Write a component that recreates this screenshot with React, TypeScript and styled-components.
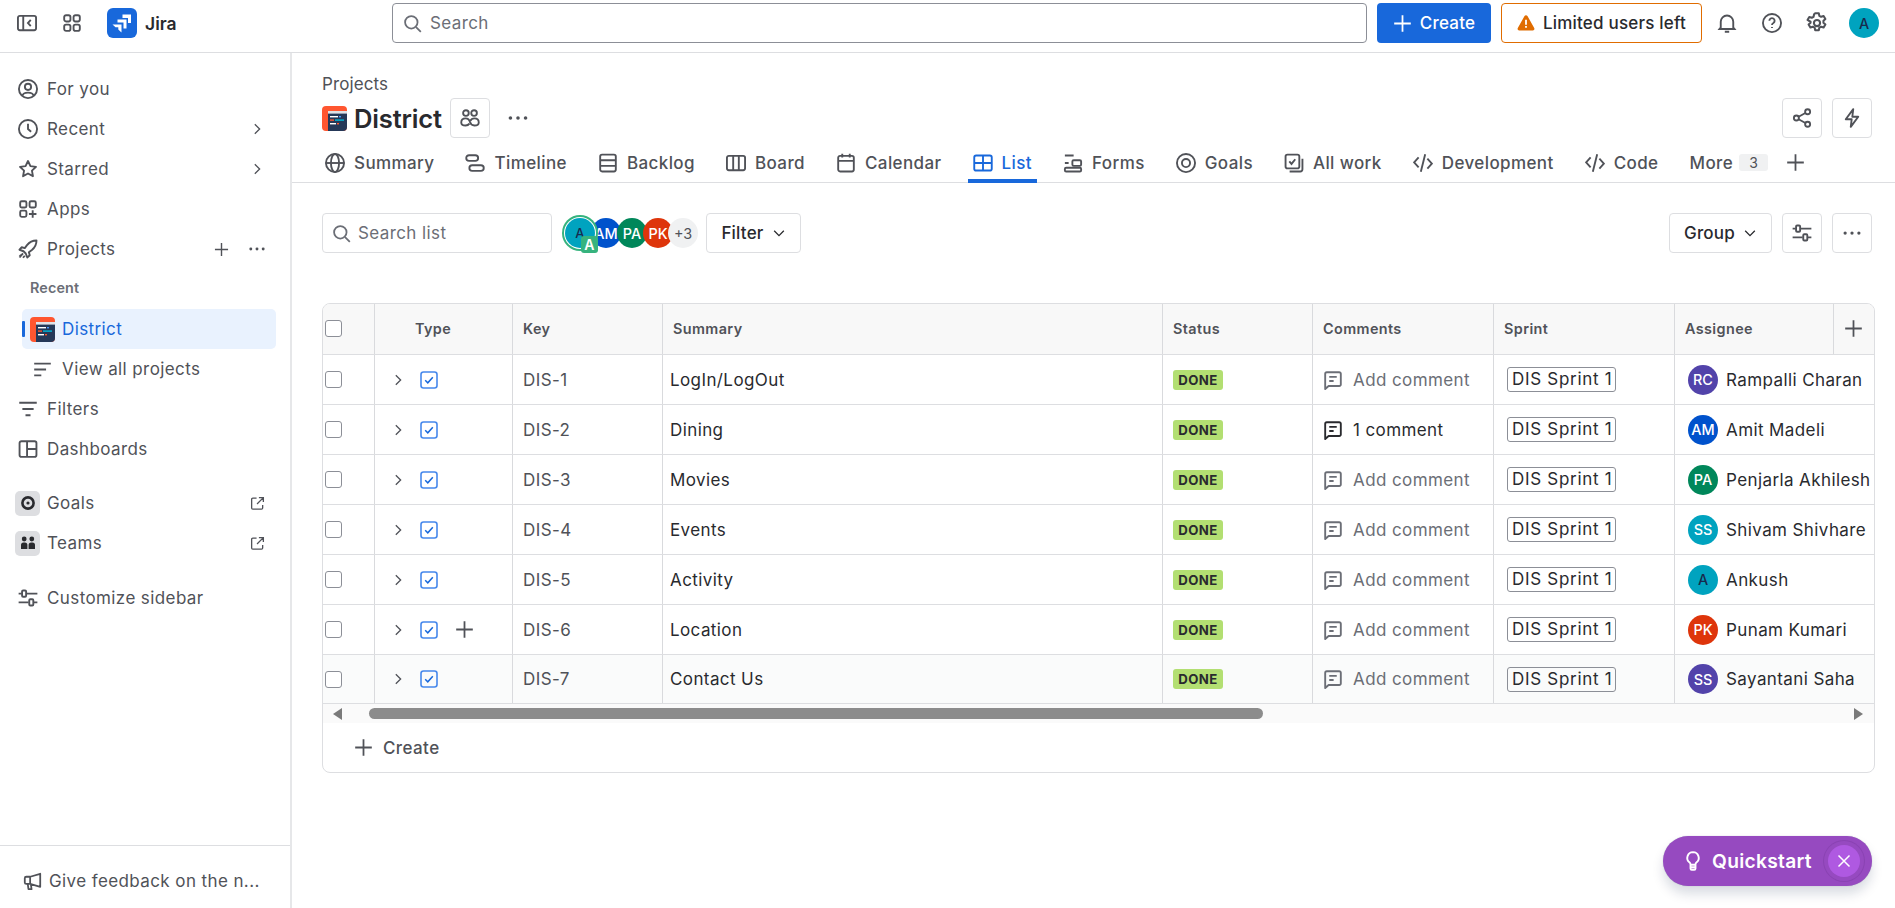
import React from 'react';
import styled, { createGlobalStyle } from 'styled-components';

const GlobalStyle = createGlobalStyle`
  * { box-sizing: border-box; }
  html, body {
    background: #fff;
    color: #292a2e;
    font-family: Inter, "Noto Sans", sans-serif;
    font-size: 17px;
    height: 100%;
    letter-spacing: 0.4px;
    margin: 0;
    overflow: hidden;
  }
`;

const Page = styled.div`
  display: flex;
  flex-direction: column;
  height: 908px;
  position: relative;
  width: 1895px;
`;

const TopBar = styled.header`
  align-items: center;
  border-bottom: 1px solid #dddee1;
  display: flex;
  flex: none;
  height: 53px;
  padding: 0 15px 6px 17px;
`;

const IconSlot = styled.span<{ $w?: number; $color?: string }>`
  align-items: center;
  color: ${(p) => p.$color || '#505258'};
  display: inline-flex;
  flex: none;
  justify-content: center;
  width: ${(p) => (p.$w ? `${p.$w}px` : 'auto')};
`;

const SwitcherSlot = styled(IconSlot)`
  margin-left: 25px;
`;

const LogoLink = styled.div`
  align-items: center;
  display: flex;
  gap: 8px;
  margin-left: 25px;
  margin-right: 215px;
  width: 71px;
`;

const Brand = styled.span`
  color: #292a2e;
  font-size: 17.5px;
  font-weight: 600;
  letter-spacing: 0;
`;

const GlobalSearch = styled.div`
  align-items: center;
  border: 1px solid #8c8f97;
  border-radius: 4px;
  color: #6b6e76;
  display: flex;
  gap: 8px;
  height: 40px;
  margin-left: -1px;
  padding: 0 10px;
  width: 975px;
`;

const CreateButton = styled.div`
  align-items: center;
  background: #1868db;
  border-radius: 4px;
  color: #fff;
  display: flex;
  font-weight: 500;
  gap: 8px;
  height: 40px;
  justify-content: center;
  letter-spacing: 0.2px;
  margin-left: 10px;
  width: 114px;
`;

const UsersLeft = styled.div`
  align-items: center;
  border: 1px solid #e06c00;
  border-radius: 4px;
  color: #292a2e;
  display: flex;
  font-weight: 500;
  gap: 8px;
  height: 40px;
  justify-content: center;
  letter-spacing: 0.2px;
  margin-left: 10px;
  margin-right: 2px;
  width: 201px;
`;

const TopIcon = styled.span`
  align-items: center;
  color: #505258;
  display: flex;
  justify-content: center;
  width: 45px;
`;

const Avatar = styled.span<{ $bg: string; $dark?: boolean; $size?: number }>`
  align-items: center;
  background: ${(p) => p.$bg};
  border-radius: 50%;
  color: ${(p) => (p.$dark ? '#172b4d' : '#fff')};
  display: inline-flex;
  flex: none;
  font-size: 14.4px;
  font-weight: 500;
  height: ${(p) => p.$size || 30}px;
  justify-content: center;
  letter-spacing: 0;
  width: ${(p) => p.$size || 30}px;
`;

const MyAvatar = styled(Avatar)`
  margin-left: 10px;
`;

const Body = styled.div`
  display: flex;
  flex: 1;
  min-height: 0;
`;

const Sidebar = styled.aside`
  border-right: 2px solid #e6e7e9;
  display: flex;
  flex: none;
  flex-direction: column;
  width: 292px;
`;

const SideNav = styled.nav`
  display: flex;
  flex: 1;
  flex-direction: column;
  padding: 16px 14px 0 0;
`;

const NavRow = styled.div<{ $gapTop?: number; $active?: boolean }>`
  align-items: center;
  background: ${(p) => (p.$active ? '#e9f2fe' : 'transparent')};
  border-radius: ${(p) => (p.$active ? '5px' : '0')};
  color: ${(p) => (p.$active ? '#1868db' : '#505258')};
  display: flex;
  flex: none;
  height: 40px;
  margin-top: ${(p) => p.$gapTop || 0}px;
  padding: 0 1px 0 15px;
  position: relative;
`;

const NavIcon = styled.span`
  align-items: center;
  color: #505258;
  display: flex;
  flex: none;
  justify-content: center;
  margin-right: 7px;
  width: 25px;
`;

const NavLabel = styled.span`
  flex: 1;
  white-space: nowrap;
`;

const ChildLabel = styled(NavLabel)`
  margin-left: 7px;
`;

const NavAction = styled.span`
  align-items: center;
  color: #505258;
  display: flex;
  flex: none;
  justify-content: center;
  width: 36px;
`;

const SectionLabel = styled.div`
  align-items: center;
  color: #6b6e76;
  display: flex;
  flex: none;
  font-size: 14.4px;
  font-weight: 600;
  height: 40px;
  letter-spacing: 0.1px;
  padding: 0 0 3px 30px;
`;

const ChildRow = styled(NavRow)`
  margin-left: 22px;
  padding-left: 8px;
`;

const SelectedMark = styled.span`
  background: #1868db;
  border-radius: 1px;
  height: 16px;
  left: 0;
  position: absolute;
  top: 12px;
  width: 3px;
`;

const IconTile = styled.span`
  align-items: center;
  background: #dddee1;
  border-radius: 5px;
  color: #292a2e;
  display: flex;
  height: 25px;
  justify-content: center;
  width: 25px;
`;

const SideFooter = styled.div`
  align-items: center;
  border-top: 1px solid #dddee1;
  color: #505258;
  display: flex;
  flex: none;
  gap: 7px;
  height: 63px;
  padding: 8px 0 0 23px;
  white-space: nowrap;
`;

const Main = styled.main`
  display: flex;
  flex: 1;
  flex-direction: column;
  min-width: 0;
`;

const Crumb = styled.div`
  color: #505258;
  flex: none;
  height: 45px;
  letter-spacing: 0.1px;
  line-height: 26px;
  padding: 18px 0 0 30px;
`;

const TitleRow = styled.div`
  align-items: center;
  display: flex;
  flex: none;
  height: 40px;
  padding: 0 23px 0 30px;
`;

const Title = styled.h1`
  color: #292a2e;
  font-size: 25.6px;
  font-weight: 600;
  letter-spacing: -0.2px;
  margin: 0 8px 0 7px;
`;

const SquareButton = styled.span<{ $left?: number }>`
  align-items: center;
  border: 1px solid #dddee1;
  border-radius: 4px;
  color: #505258;
  display: flex;
  flex: none;
  height: 40px;
  justify-content: center;
  margin-left: ${(p) => p.$left || 0}px;
  width: 40px;
`;

const BareButton = styled(SquareButton)`
  border-color: transparent;
  margin-left: 8px;
`;

const Spacer = styled.span`
  flex: 1;
`;

const TabBar = styled.nav`
  align-items: stretch;
  border-bottom: 1px solid #dddee1;
  display: flex;
  flex: none;
  gap: 21px;
  height: 45px;
  padding-left: 28px;
`;

const Tab = styled.span<{ $active?: boolean }>`
  align-items: center;
  border-bottom: 4px solid ${(p) => (p.$active ? '#1868db' : 'transparent')};
  color: ${(p) => (p.$active ? '#1868db' : '#505258')};
  display: flex;
  font-weight: 500;
  gap: 9px;
  margin-bottom: -1px;
  padding: 8px 5px 0;
  white-space: nowrap;
`;

const MoreCount = styled.span`
  background: #f0f1f2;
  border-radius: 3px;
  color: #505258;
  font-size: 14px;
  font-weight: 400;
  margin-left: -3px;
  padding: 0 10px;
`;

const TabPlus = styled.span`
  align-items: center;
  color: #505258;
  display: flex;
  margin-left: -8px;
  padding-top: 4px;
`;

const Toolbar = styled.div`
  align-items: center;
  display: flex;
  flex: none;
  height: 40px;
  margin-top: 30px;
  padding: 0 23px 0 30px;
`;

const ListSearch = styled.div`
  align-items: center;
  border: 1px solid #dddee1;
  border-radius: 4px;
  color: #6b6e76;
  display: flex;
  gap: 7px;
  height: 40px;
  padding: 0 9px;
  width: 230px;
`;

const AvatarGroup = styled.div`
  align-items: center;
  display: flex;
  margin-left: 11px;
  width: 143px;
`;

const MeAvatar = styled.span`
  align-items: center;
  background: #00a3bf;
  border-radius: 50%;
  box-shadow: 0 0 0 1px #fff, 0 0 0 3px #36b37e;
  color: #172b4d;
  display: inline-flex;
  flex: none;
  font-size: 13px;
  font-weight: 500;
  height: 30px;
  justify-content: center;
  margin-left: 2px;
  position: relative;
  width: 30px;
  z-index: 2;
`;

const MeBadge = styled.span`
  align-items: center;
  background: #36b37e;
  border-radius: 3px;
  bottom: -5px;
  color: #fff;
  display: flex;
  font-size: 14px;
  font-weight: 600;
  height: 17px;
  justify-content: center;
  position: absolute;
  right: -3px;
  width: 17px;
`;

const StackedAvatar = styled(Avatar)`
  margin-left: -4px;
`;

const OverflowAvatar = styled(Avatar)`
  background: #f0f1f2;
  color: #505258;
  font-weight: 400;
  margin-left: -5px;
`;

const SelectButton = styled.span<{ $w: number; $left?: number }>`
  align-items: center;
  border: 1px solid #dddee1;
  border-radius: 4px;
  color: #292a2e;
  display: flex;
  flex: none;
  font-weight: 500;
  gap: 8px;
  height: 40px;
  justify-content: center;
  letter-spacing: 0.2px;
  margin-left: ${(p) => p.$left || 0}px;
  width: ${(p) => p.$w}px;
`;

const TableCard = styled.section`
  border: 1px solid #dddee1;
  border-radius: 8px;
  flex: none;
  margin: 50px 20px 0 30px;
  overflow: hidden;
`;

const COLUMNS = '52px 138px 150px 500px 150px 181px 181px';

const HeadRow = styled.div`
  background: #f8f8f8;
  border-bottom: 1px solid #dddee1;
  display: grid;
  grid-template-columns: ${COLUMNS} 159px 1fr;
  height: 51px;
`;

const Row = styled.div<{ $tint?: boolean; $last?: boolean }>`
  background: ${(p) => (p.$tint ? '#fafbfb' : '#fff')};
  border-bottom: 1px solid #dddee1;
  display: grid;
  grid-template-columns: ${COLUMNS} 1fr;
  height: ${(p) => (p.$last ? 49 : 50)}px;
`;

const Cell = styled.div<{ $pad?: number; $color?: string; $end?: boolean }>`
  align-items: center;
  border-right: ${(p) => (p.$end ? 'none' : '1px solid #d9dadd')};
  color: ${(p) => p.$color || '#292a2e'};
  display: flex;
  min-width: 0;
  overflow: hidden;
  padding-left: ${(p) => (p.$pad === undefined ? 10 : p.$pad)}px;
  white-space: nowrap;
`;

const HeadCell = styled(Cell)`
  color: #505258;
  font-size: 14.4px;
  font-weight: 600;
  padding-bottom: 2px;
`;

const Box = styled.span`
  background: #fff;
  border: 1px solid #8c8f97;
  border-radius: 3px;
  display: block;
  flex: none;
  height: 17px;
  width: 17px;
`;

const TypeIcon = styled.span`
  align-items: center;
  display: flex;
  margin-left: 15px;
`;

const RowPlus = styled.span`
  align-items: center;
  color: #505258;
  display: flex;
  margin-left: 17px;
`;

const Lozenge = styled.span`
  background: #b3df72;
  border-radius: 3px;
  color: #292a2e;
  font-size: 13.2px;
  font-weight: 700;
  height: 20px;
  line-height: 20px;
  text-align: center;
  width: 50px;
`;

const CommentLink = styled.span<{ $has?: boolean }>`
  align-items: center;
  color: ${(p) => (p.$has ? '#292a2e' : '#6b6e76')};
  display: flex;
  gap: 10px;
`;

const SprintChip = styled.span`
  border: 1px solid #8c8f97;
  border-radius: 3px;
  color: #292a2e;
  height: 25px;
  letter-spacing: 0.7px;
  line-height: 23px;
  margin-left: 3px;
  padding: 0 4px;
  width: 109px;
`;

const Assignee = styled.span`
  align-items: center;
  display: flex;
  gap: 8px;
  margin-left: 3px;
`;

const ScrollTrack = styled.div`
  align-items: center;
  background: #fafafa;
  display: flex;
  height: 19px;
`;

const ScrollArrow = styled.span<{ $right?: boolean }>`
  border-bottom: 6px solid transparent;
  border-left: ${(p) => (p.$right ? '9px solid #7a7a7a' : 'none')};
  border-right: ${(p) => (p.$right ? 'none' : '9px solid #7a7a7a')};
  border-top: 6px solid transparent;
  flex: none;
  margin-left: ${(p) => (p.$right ? 'auto' : '10px')};
  margin-right: ${(p) => (p.$right ? '11px' : '0')};
`;

const ScrollThumb = styled.span`
  background: #8c8c8c;
  border-radius: 6px;
  flex: none;
  height: 11px;
  margin-left: 27px;
  width: 894px;
`;

const CreateRow = styled.div`
  align-items: center;
  color: #505258;
  display: flex;
  font-weight: 500;
  gap: 10px;
  height: 49px;
  padding-left: 31px;
`;

const Quickstart = styled.div`
  align-items: center;
  background: #964ac0;
  border-radius: 25px;
  bottom: 22px;
  box-shadow: 0 8px 12px rgba(9, 30, 66, 0.15), 0 0 1px rgba(9, 30, 66, 0.31);
  color: #fff;
  display: flex;
  font-size: 19.2px;
  font-weight: 600;
  height: 50px;
  letter-spacing: 0.3px;
  padding-left: 20px;
  position: absolute;
  right: 23px;
  width: 209px;
`;

const QuickstartLabel = styled.span`
  flex: 1;
  margin-left: 9px;
`;

const QuickstartClose = styled.span`
  align-items: center;
  background: #af59e1;
  border-radius: 50%;
  box-shadow: 0 0 0 4px #964ac0, 0 0 0 5px #8a43b2;
  color: #fff;
  display: flex;
  height: 32px;
  justify-content: center;
  margin-right: 12px;
  width: 32px;
`;

const shapes: Record<string, React.ReactNode> = {
  panel: <><rect x="0.75" y="2.25" width="14.5" height="11.5" rx="1.5" /><path d="M5 2.25v11.5M11 5.5 8.75 8 11 10.5" /></>,
  grid: <><rect x="1.75" y="1.75" width="5" height="5" rx="1.5" /><rect x="9.25" y="1.75" width="5" height="5" rx="1.5" /><rect x="1.75" y="9.25" width="5" height="5" rx="1.5" /><rect x="9.25" y="9.25" width="5" height="5" rx="1.5" /></>,
  search: <><circle cx="7" cy="7" r="5.25" /><path d="m11 11 4 4" /></>,
  plus: <path d="M8 1v14M1 8h14" />,
  bell: <path d="M3 11.5V7a5 5 0 0 1 10 0v4.5l1 1.25H2L3 11.5ZM6.25 15h3.5" />,
  help: <><circle cx="8" cy="8" r="7.25" /><path d="M5.9 6.2a2.1 2.1 0 1 1 3.2 1.8c-.7.4-1.1.8-1.1 1.6M8 11.2v.8" /></>,
  gear: <><circle cx="8" cy="8" r="2.25" /><path d="M6.7.9h2.6l.4 1.9 1.3.7 1.8-.6 1.3 2.2-1.4 1.3v1.4l1.4 1.3-1.3 2.2-1.8-.6-1.3.7-.4 1.9H6.7l-.4-1.9-1.3-.7-1.8.6-1.3-2.2 1.4-1.3V7.1L1.1 5.8l1.3-2.2 1.8.6 1.3-.7.4-1.9Z" strokeLinejoin="round" /></>,
  user: <><circle cx="8" cy="8" r="7.25" /><circle cx="8" cy="6.25" r="2.5" /><path d="M3.4 13.4C4 11.4 5.8 10.9 8 10.9s4 .5 4.6 2.5" /></>,
  clock: <><circle cx="8" cy="8" r="7.25" /><path d="M8 3.75V8l2.5 2.25" /></>,
  star: <path d="m8 1.6 1.95 4.05 4.45.6-3.25 3.1.8 4.4L8 11.6l-3.95 2.15.8-4.4L1.6 6.25l4.45-.6L8 1.6Z" strokeLinejoin="round" />,
  chevronRight: <path d="m5.5 2.5 5.5 5.5-5.5 5.5" />,
  chevronDown: <path d="m2.5 5.5 5.5 5.5 5.5-5.5" />,
  appsAdd: <><rect x="1.75" y="1.75" width="5" height="5" rx="1.2" /><rect x="9.25" y="1.75" width="5" height="5" rx="1.2" /><rect x="1.75" y="9.25" width="5" height="5" rx="1.2" /><path d="M11.75 9v6M8.75 12h6" /></>,
  rocket: <path d="M14.8 1.2c-3.2 0-5.7 1.3-7.6 3.7L5.4 7.3 3 6.6 1.2 8.6l3.2 1.2 1.8 1.8 1.2 3.2 2-1.8-.7-2.4 2.4-1.8c2.4-1.9 3.7-4.4 3.7-7.6ZM4 11.5l-2.8 3.3M2.4 12.6 1.2 14M5.4 13.4 4 15" strokeLinejoin="round" />,
  dots: <><circle cx="2.5" cy="8" r="1.3" fill="currentColor" stroke="none" /><circle cx="8" cy="8" r="1.3" fill="currentColor" stroke="none" /><circle cx="13.5" cy="8" r="1.3" fill="currentColor" stroke="none" /></>,
  lines: <path d="M1 3h14M1 8h10M1 13h6" />,
  filter: <path d="M1 3h14M3.5 8h9M6 13h4" />,
  layout: <><rect x="1.25" y="1.75" width="13.5" height="12.5" rx="1.5" /><path d="M7.25 1.75v12.5M7.25 8h7.5" /></>,
  external: <path d="M7 2.25H3A1.25 1.25 0 0 0 1.75 3.5v9.25A1.25 1.25 0 0 0 3 14h9.25a1.25 1.25 0 0 0 1.25-1.25V9.5M9.5 1.75h4.75V6.5M14 2 7.5 8.5" />,
  sliders: <><path d="M0.5 4.5h2.5M7 4.5h8.5M0.5 11.5H8.5M12.5 11.5h3" /><rect x="3.25" y="2" width="3.25" height="5" rx="0.8" /><rect x="9" y="9" width="3.25" height="5" rx="0.8" /></>,
  megaphone: <path d="M14.5 1.5v11L6 10H2.75A1.25 1.25 0 0 1 1.5 8.75v-3.5A1.25 1.25 0 0 1 2.75 4H6l8.5-2.5ZM6 4v6M4 10l.6 4.5h2.6L6.6 10.2" strokeLinejoin="round" />,
  people: <><circle cx="4.75" cy="4" r="2.25" /><circle cx="11.25" cy="4" r="2.25" /><path d="M1 11.5c0-2 1.5-3.25 3.5-3.25s3 1.2 3.5 3c.5 1.8 1.8 2.75 3.5 2.75 2 0 3.5-.7 3.5-2.5 0-2-1.5-3.25-3.5-3.25-1.6 0-2.7.8-3.2 2M1 11.5c0 1.6 1.4 2.5 3.5 2.5 1.3 0 2.4-.6 3-1.5" /></>,
  share: <><circle cx="12.5" cy="3" r="2" /><circle cx="3.5" cy="8" r="2" /><circle cx="12.5" cy="13" r="2" /><path d="m5.3 7 5.4-3M5.3 9l5.4 3" /></>,
  bolt: <path d="M9 .9 3 9h4.75L7 15.1 13 7H8.25L9 .9Z" strokeLinejoin="round" />,
  globe: <><circle cx="8" cy="8" r="7.25" /><ellipse cx="8" cy="8" rx="3.25" ry="7.25" /><path d="M.75 8h14.5" /></>,
  timeline: <><rect x="1" y="1.75" width="9.5" height="4.5" rx="2.25" /><rect x="3.5" y="9.75" width="11.5" height="4.5" rx="2.25" /></>,
  backlog: <><rect x="1.75" y="1.25" width="12.5" height="13.5" rx="1.5" /><path d="M1.75 5.75h12.5M1.75 10.25h12.5" /></>,
  board: <><rect x="0.75" y="2.25" width="14.5" height="11.5" rx="1.5" /><path d="M5.75 2.25v11.5M10.25 2.25v11.5" /></>,
  calendar: <><rect x="1.75" y="2.25" width="12.5" height="12.5" rx="1.5" /><path d="M1.75 6.25h12.5M5 .5v3M11 .5v3" /></>,
  list: <><rect x="1" y="2" width="14" height="12" rx="1.5" /><path d="M1 8h14M8 2v12" /></>,
  forms: <><path d="M1.5 2h7M1.5 8h3" /><rect x="7.5" y="5.75" width="7" height="4.5" rx="1" /><rect x="1.5" y="11.75" width="13" height="3" rx="1" /></>,
  target: <><circle cx="8" cy="8" r="7.25" /><circle cx="8" cy="8" r="3.25" /></>,
  allWork: <><rect x="1.25" y="1.25" width="11" height="11" rx="1.5" /><path d="m4.25 6.75 1.75 2 3-3.75M14.75 4.5V13a1.75 1.75 0 0 1-1.75 1.75H4.5" /></>,
  code: <path d="M4.5 3.5.9 7.5l3.6 4M11.5 4.5l3.6 4-3.6 4M9.75 1 6.25 15" />,
  comment: <><path d="M1.75 3A1.25 1.25 0 0 1 3 1.75h10A1.25 1.25 0 0 1 14.25 3v8.5A1.25 1.25 0 0 1 13 12.75H4.5l-2.75 2.5V3Z" strokeLinejoin="round" /><path d="M5 5.5h6M5 8.75h3.5" /></>,
  bulb: <path d="M8 .9a4.6 4.6 0 0 0-2.7 8.3c.5.4.7.9.7 1.5V11h4v-.3c0-.6.2-1.1.7-1.5A4.6 4.6 0 0 0 8 .9ZM6 11v3a1 1 0 0 0 1 1h2a1 1 0 0 0 1-1v-3M6 13h4" strokeLinejoin="round" />,
  close: <path d="m2.5 2.5 11 11M13.5 2.5l-11 11" />,
};

const Icon = ({ name, size = 20, stroke = 1.5 }: { name: string; size?: number; stroke?: number }) => (
  <svg width={size} height={size} viewBox="0 0 16 16" fill="none" stroke="currentColor" strokeWidth={stroke}>
    {shapes[name]}
  </svg>
);

const JiraLogo = () => (
  <svg width="30" height="30" viewBox="0 0 30 30">
    <rect width="30" height="30" rx="6" fill="#1868db" />
    <path fill="#fff" d="M15.5 6.5h8.5V15h-3v-5h-5.5zM10.5 11.5h9v9h-3v-6h-6zM5.5 16.5h9v8l-3.2-3v-2.2H8.5z" />
  </svg>
);

const ProjectLogo = () => (
  <svg width="25" height="25" viewBox="0 0 25 25">
    <rect width="25" height="25" rx="4" fill="#ff5630" />
    <path fill="#253858" d="M6 5h19v16a4 4 0 0 1-4 4H6z" />
    <rect x="6" y="5" width="19" height="2.6" fill="#dfe1e6" />
    <rect x="8" y="10" width="8" height="1.4" fill="#fff" />
    <rect x="17" y="10" width="2" height="1.4" fill="#4c9aff" />
    <rect x="8" y="13.4" width="4" height="1.4" fill="#ff5630" />
    <rect x="13" y="13.4" width="9" height="1.4" fill="#00b8d9" />
    <rect x="8" y="17" width="6" height="1.4" fill="#fff" />
    <rect x="15" y="17" width="2" height="1.4" fill="#ff5630" />
  </svg>
);

const Warning = () => (
  <svg width="18" height="18" viewBox="0 0 16 16">
    <path fill="#e06c00" d="M6.7 1.8a1.5 1.5 0 0 1 2.6 0l6 10.7a1.5 1.5 0 0 1-1.3 2.2H2a1.5 1.5 0 0 1-1.3-2.2l6-10.7Z" />
    <path fill="#fff" d="M7.2 5h1.6v4.6H7.2zM7.2 10.6h1.6v1.7H7.2z" />
  </svg>
);

const TaskIcon = () => (
  <svg width="18" height="18" viewBox="0 0 18 18" fill="none">
    <rect x="1" y="1" width="16" height="16" rx="2.5" stroke="#4688ec" strokeWidth="1.6" />
    <path d="m5.2 9.2 2.6 2.6 5-5.6" stroke="#1868db" strokeWidth="1.5" />
  </svg>
);

const PeopleSolid = () => (
  <svg width="16" height="16" viewBox="0 0 16 16" fill="#292a2e">
    <circle cx="4.2" cy="4" r="2.4" />
    <circle cx="11.8" cy="4" r="2.4" />
    <path d="M1 14V10a2.5 2.5 0 0 1 2.5-2.5h1.4A2.5 2.5 0 0 1 7.4 10v4zM8.6 14v-4a2.5 2.5 0 0 1 2.5-2.5h1.4A2.5 2.5 0 0 1 15 10v4z" />
  </svg>
);

const GoalSolid = () => (
  <svg width="16" height="16" viewBox="0 0 16 16" fill="none" stroke="#292a2e">
    <circle cx="8" cy="8" r="5.6" strokeWidth="2.6" />
    <circle cx="8" cy="8" r="1.6" fill="#292a2e" strokeWidth="0" />
  </svg>
);

const tabs = [
  { label: 'Summary', icon: 'globe' },
  { label: 'Timeline', icon: 'timeline' },
  { label: 'Backlog', icon: 'backlog' },
  { label: 'Board', icon: 'board' },
  { label: 'Calendar', icon: 'calendar' },
  { label: 'List', icon: 'list', active: true },
  { label: 'Forms', icon: 'forms' },
  { label: 'Goals', icon: 'target' },
  { label: 'All work', icon: 'allWork' },
  { label: 'Development', icon: 'code' },
  { label: 'Code', icon: 'code' },
];

const issues = [
  { key: 'DIS-1', summary: 'LogIn/LogOut', name: 'Rampalli Charan', initials: 'RC', color: '#5243aa' },
  { key: 'DIS-2', summary: 'Dining', name: 'Amit Madeli', initials: 'AM', color: '#0052cc', comments: 1 },
  { key: 'DIS-3', summary: 'Movies', name: 'Penjarla Akhilesh', initials: 'PA', color: '#00875a' },
  { key: 'DIS-4', summary: 'Events', name: 'Shivam Shivhare', initials: 'SS', color: '#00a3bf' },
  { key: 'DIS-5', summary: 'Activity', name: 'Ankush', initials: 'A', color: '#00a3bf', dark: true },
  { key: 'DIS-6', summary: 'Location', name: 'Punam Kumari', initials: 'PK', color: '#de350b', adding: true },
  { key: 'DIS-7', summary: 'Contact Us', name: 'Sayantani Saha', initials: 'SS', color: '#5243aa' },
];

const App: React.FC = () => {
  return (
    <Page>
      <GlobalStyle />
      <TopBar>
        <IconSlot $w={20}><Icon name="panel" /></IconSlot>
        <SwitcherSlot $w={20}><Icon name="grid" /></SwitcherSlot>
        <LogoLink>
          <JiraLogo />
          <Brand>Jira</Brand>
        </LogoLink>
        <GlobalSearch>
          <Icon name="search" size={19} />
          Search
        </GlobalSearch>
        <CreateButton><Icon name="plus" size={19} />Create</CreateButton>
        <UsersLeft><Warning />Limited users left</UsersLeft>
        <TopIcon><Icon name="bell" /></TopIcon>
        <TopIcon><Icon name="help" /></TopIcon>
        <TopIcon><Icon name="gear" size={22} /></TopIcon>
        <MyAvatar $bg="#00a3bf" $dark>A</MyAvatar>
      </TopBar>
      <Body>
        <Sidebar>
          <SideNav>
            <NavRow><NavIcon><Icon name="user" /></NavIcon><NavLabel>For you</NavLabel></NavRow>
            <NavRow>
              <NavIcon><Icon name="clock" /></NavIcon><NavLabel>Recent</NavLabel>
              <NavAction><Icon name="chevronRight" size={14} /></NavAction>
            </NavRow>
            <NavRow>
              <NavIcon><Icon name="star" /></NavIcon><NavLabel>Starred</NavLabel>
              <NavAction><Icon name="chevronRight" size={14} /></NavAction>
            </NavRow>
            <NavRow><NavIcon><Icon name="appsAdd" /></NavIcon><NavLabel>Apps</NavLabel></NavRow>
            <NavRow>
              <NavIcon><Icon name="rocket" /></NavIcon><NavLabel>Projects</NavLabel>
              <NavAction><Icon name="plus" size={15} /></NavAction>
              <NavAction><Icon name="dots" size={18} /></NavAction>
            </NavRow>
            <SectionLabel>Recent</SectionLabel>
            <ChildRow $active>
              <SelectedMark />
              <ProjectLogo />
              <ChildLabel>District</ChildLabel>
            </ChildRow>
            <ChildRow>
              <IconSlot $w={25}><Icon name="lines" size={19} /></IconSlot>
              <ChildLabel>View all projects</ChildLabel>
            </ChildRow>
            <NavRow><NavIcon><Icon name="filter" /></NavIcon><NavLabel>Filters</NavLabel></NavRow>
            <NavRow><NavIcon><Icon name="layout" /></NavIcon><NavLabel>Dashboards</NavLabel></NavRow>
            <NavRow $gapTop={14}>
              <NavIcon><IconTile><GoalSolid /></IconTile></NavIcon><NavLabel>Goals</NavLabel>
              <NavAction><Icon name="external" size={15} stroke={1.4} /></NavAction>
            </NavRow>
            <NavRow>
              <NavIcon><IconTile><PeopleSolid /></IconTile></NavIcon><NavLabel>Teams</NavLabel>
              <NavAction><Icon name="external" size={15} stroke={1.4} /></NavAction>
            </NavRow>
            <NavRow $gapTop={15}><NavIcon><Icon name="sliders" /></NavIcon><NavLabel>Customize sidebar</NavLabel></NavRow>
          </SideNav>
          <SideFooter><Icon name="megaphone" size={19} />Give feedback on the n...</SideFooter>
        </Sidebar>
        <Main>
          <Crumb>Projects</Crumb>
          <TitleRow>
            <ProjectLogo />
            <Title>District</Title>
            <SquareButton><Icon name="people" /></SquareButton>
            <BareButton><Icon name="dots" size={22} /></BareButton>
            <Spacer />
            <SquareButton><Icon name="share" /></SquareButton>
            <SquareButton $left={10}><Icon name="bolt" /></SquareButton>
          </TitleRow>
          <TabBar>
            {tabs.map((tab) => (
              <Tab key={tab.label} $active={tab.active}>
                <Icon name={tab.icon} />
                {tab.label}
              </Tab>
            ))}
            <Tab>More<MoreCount>3</MoreCount></Tab>
            <TabPlus><Icon name="plus" size={19} /></TabPlus>
          </TabBar>
          <Toolbar>
            <ListSearch><Icon name="search" size={19} />Search list</ListSearch>
            <AvatarGroup>
              <MeAvatar>A<MeBadge>A</MeBadge></MeAvatar>
              <StackedAvatar $bg="#0052cc">AM</StackedAvatar>
              <StackedAvatar $bg="#00875a">PA</StackedAvatar>
              <StackedAvatar $bg="#de350b">PK</StackedAvatar>
              <OverflowAvatar $bg="#f0f1f2">+3</OverflowAvatar>
            </AvatarGroup>
            <SelectButton $w={95}>Filter<Icon name="chevronDown" size={14} /></SelectButton>
            <Spacer />
            <SelectButton $w={103}>Group<Icon name="chevronDown" size={14} /></SelectButton>
            <SquareButton $left={10}><Icon name="sliders" /></SquareButton>
            <SquareButton $left={10}><Icon name="dots" /></SquareButton>
          </Toolbar>
          <TableCard>
            <HeadRow>
              <HeadCell $pad={2}><Box /></HeadCell>
              <HeadCell $pad={40}>Type</HeadCell>
              <HeadCell>Key</HeadCell>
              <HeadCell>Summary</HeadCell>
              <HeadCell>Status</HeadCell>
              <HeadCell>Comments</HeadCell>
              <HeadCell>Sprint</HeadCell>
              <HeadCell>Assignee</HeadCell>
              <HeadCell $pad={10} $end><IconSlot><Icon name="plus" size={19} /></IconSlot></HeadCell>
            </HeadRow>
            {issues.map((issue, i) => (
              <Row key={issue.key} $tint={i === issues.length - 1} $last={i === issues.length - 1}>
                <Cell $pad={2}><Box /></Cell>
                <Cell $pad={16}>
                  <IconSlot><Icon name="chevronRight" size={14} /></IconSlot>
                  <TypeIcon><TaskIcon /></TypeIcon>
                  {issue.adding && <RowPlus><Icon name="plus" size={19} /></RowPlus>}
                </Cell>
                <Cell $color="#505258">{issue.key}</Cell>
                <Cell $pad={7}>{issue.summary}</Cell>
                <Cell><Lozenge>DONE</Lozenge></Cell>
                <Cell>
                  <CommentLink $has={!!issue.comments}>
                    <Icon name="comment" />
                    {issue.comments ? '1 comment' : 'Add comment'}
                  </CommentLink>
                </Cell>
                <Cell><SprintChip>DIS Sprint 1</SprintChip></Cell>
                <Cell $end>
                  <Assignee>
                    <Avatar $bg={issue.color} $dark={issue.dark}>{issue.initials}</Avatar>
                    {issue.name}
                  </Assignee>
                </Cell>
              </Row>
            ))}
            <ScrollTrack>
              <ScrollArrow />
              <ScrollThumb />
              <ScrollArrow $right />
            </ScrollTrack>
            <CreateRow><Icon name="plus" size={19} />Create</CreateRow>
          </TableCard>
        </Main>
      </Body>
      <Quickstart>
        <Icon name="bulb" />
        <QuickstartLabel>Quickstart</QuickstartLabel>
        <QuickstartClose><Icon name="close" size={16} /></QuickstartClose>
      </Quickstart>
    </Page>
  );
};

export default App;
